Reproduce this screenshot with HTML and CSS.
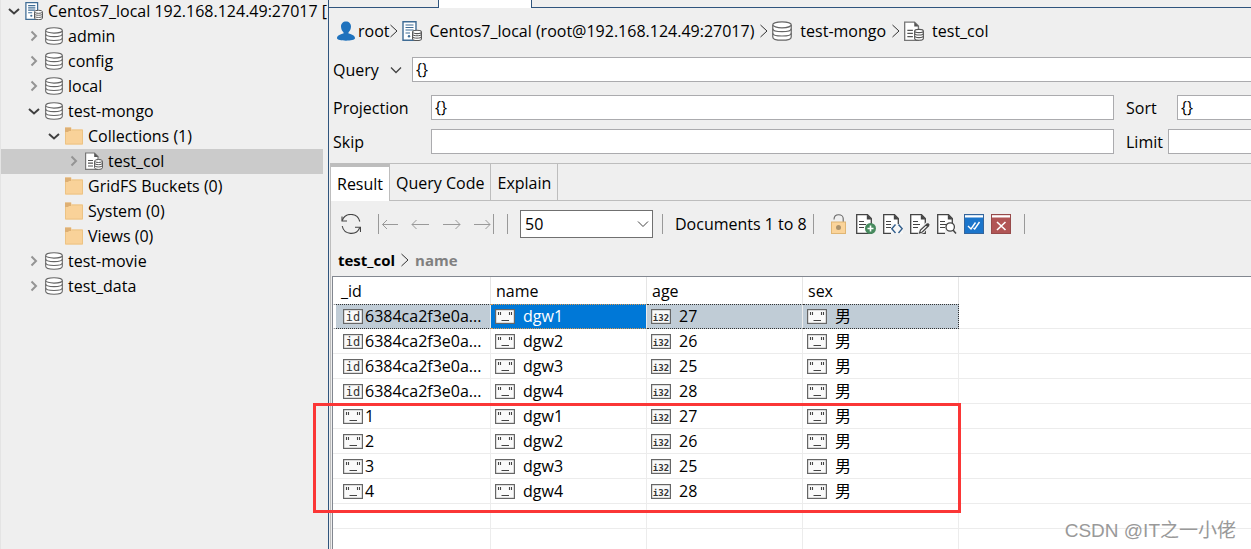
FILE: index.html
```html
<!DOCTYPE html>
<html lang="en">

<head>
    <meta charset="UTF-8">
    <meta name="viewport" content="width=device-width, initial-scale=1.0">
    <title>test_col - Centos7_local</title>
    <link rel="stylesheet" href="styles.css">
</head>

<body>
    <!-- Shared icons -->
    <svg class="sprite" xmlns="http://www.w3.org/2000/svg">
        <symbol id="i-right" viewBox="0 0 14 14">
            <path d="M4.5 2.5L9 7L4.5 11.5" fill="none" stroke="#949494" stroke-width="2" />
        </symbol>
        <symbol id="i-down" viewBox="0 0 14 14">
            <path d="M2 5L7 9.5L12 5" fill="none" stroke="#404040" stroke-width="2" />
        </symbol>
        <symbol id="i-sep" viewBox="0 0 8 14">
            <path d="M0.5 1L7 7L0.5 13" fill="none" stroke="#333" />
        </symbol>
        <symbol id="i-db" viewBox="0 0 18 18">
            <path d="M0.7 3.5V14.3C0.7 16.2 4.4 17.3 9 17.3S17.3 16.2 17.3 14.3V3.5" fill="#fff" stroke="#666" stroke-width="1.1" />
            <ellipse cx="9" cy="3.4" rx="8.3" ry="2.7" fill="#fff" stroke="#666" stroke-width="1.1" />
            <path d="M0.7 7C0.7 8.9 4.4 9.6 9 9.6S17.3 8.9 17.3 7M0.7 11C0.7 12.9 4.4 13.5 9 13.5S17.3 12.9 17.3 11" fill="none" stroke="#666" stroke-width="1.1" />
        </symbol>
        <symbol id="i-server" viewBox="0 0 20 20">
            <path d="M1 0.8H14V19.2H1Z" fill="#fff" stroke="#3f6c95" stroke-width="1.4" />
            <path d="M3.5 4H11.5M3.5 6.5H11.5M3.5 9H11.5M3.5 12H8" stroke="#3f6c95" stroke-width="1.2" />
            <circle cx="7" cy="15.3" r="1.2" fill="#3f6c95" />
            <path d="M10.6 10.9V18C10.6 20.1 19.4 20.1 19.4 18V10.9" fill="#fff" stroke="#555" stroke-width="1.1" />
            <ellipse cx="15" cy="10.9" rx="4.4" ry="1.7" fill="#fff" stroke="#555" stroke-width="1.1" />
            <path d="M10.6 13.4C10.6 15.2 19.4 15.2 19.4 13.4M10.6 15.8C10.6 17.6 19.4 17.6 19.4 15.8" fill="none" stroke="#555" />
        </symbol>
        <symbol id="i-folder" viewBox="0 0 18 18">
            <path d="M0 0.5H6.5V2.5H18V17.5H0Z" fill="#f9d299" />
            <path d="M0.5 4V17H17.5V3H6.5" fill="none" stroke="#ecc384" />
            <path d="M0 0.5H6V4H4L3 5H0Z" fill="#deb074" />
        </symbol>
        <symbol id="i-col" viewBox="0 0 18 18">
            <path d="M0.6 1H9.5L13 4.5V17.4H0.6Z" fill="#fff" stroke="#777" stroke-width="1.2" />
            <path d="M9.2 1V5H13.4Z" fill="#555" />
            <path d="M3 8.5H8M3 11.2H8M3 14H8" stroke="#555" stroke-width="1.2" />
            <path d="M9.6 9V15.8C9.6 17.9 17.4 17.9 17.4 15.8V9" fill="#fff" stroke="#555" />
            <ellipse cx="13.5" cy="9" rx="3.9" ry="1.5" fill="#fff" stroke="#555" />
            <path d="M9.6 11.2C9.6 13.1 17.4 13.1 17.4 11.2M9.6 13.5C9.6 15.4 17.4 15.4 17.4 13.5" fill="none" stroke="#555" />
        </symbol>
        <symbol id="i-doc" viewBox="0 0 20 20">
            <path d="M0.7 0.7H11.5L15.3 4.5V19.3H0.7Z" fill="#fff" stroke="#444" stroke-width="1.3" />
            <path d="M10.8 0.5V5.5H16Z" fill="#444" />
            <path d="M3 7.5H8M3 10.5H10M3 13.5H8" stroke="#444" stroke-width="1.2" />
        </symbol>
        <symbol id="t-str" viewBox="0 0 20 15">
            <rect x="0.6" y="0.6" width="18.8" height="13.8" fill="#fafafa" stroke="#666" stroke-width="1.2" />
            <path d="M3.5 3V6M5.5 3V6M14.5 3V6M16.5 3V6M6.5 11.5H14" stroke="#444" stroke-width="1.1" />
        </symbol>
        <symbol id="t-id" viewBox="0 0 20 15">
            <rect x="0.6" y="0.6" width="18.8" height="13.8" fill="#fafafa" stroke="#666" stroke-width="1.2" />
            <text x="10" y="11.5" text-anchor="middle" class="type-text">id</text>
        </symbol>
        <symbol id="t-int" viewBox="0 0 20 15">
            <rect x="0.6" y="0.6" width="18.8" height="13.8" fill="#fafafa" stroke="#666" stroke-width="1.2" />
            <text x="10" y="11.5" text-anchor="middle" class="type-text int">i32</text>
        </symbol>
    </svg>

    <div class="app">
        <!-- Connection tree -->
        <nav class="sidebar">
            <ul class="tree">
                <li class="node root"><svg class="arrow"><use href="#i-down" /></svg><svg class="icon"><use href="#i-server" /></svg>Centos7_local 192.168.124.49:27017 [</li>
                <li class="node level-1"><svg class="arrow"><use href="#i-right" /></svg><svg class="icon"><use href="#i-db" /></svg>admin</li>
                <li class="node level-1"><svg class="arrow"><use href="#i-right" /></svg><svg class="icon"><use href="#i-db" /></svg>config</li>
                <li class="node level-1"><svg class="arrow"><use href="#i-right" /></svg><svg class="icon"><use href="#i-db" /></svg>local</li>
                <li class="node level-1"><svg class="arrow"><use href="#i-down" /></svg><svg class="icon"><use href="#i-db" /></svg>test-mongo</li>
                <li class="node level-2"><svg class="arrow"><use href="#i-down" /></svg><svg class="icon"><use href="#i-folder" /></svg>Collections (1)</li>
                <li class="node level-3 selected"><svg class="arrow"><use href="#i-right" /></svg><svg class="icon"><use href="#i-col" /></svg>test_col</li>
                <li class="node level-2"><span class="arrow"></span><svg class="icon"><use href="#i-folder" /></svg>GridFS Buckets (0)</li>
                <li class="node level-2"><span class="arrow"></span><svg class="icon"><use href="#i-folder" /></svg>System (0)</li>
                <li class="node level-2"><span class="arrow"></span><svg class="icon"><use href="#i-folder" /></svg>Views (0)</li>
                <li class="node level-1"><svg class="arrow"><use href="#i-right" /></svg><svg class="icon"><use href="#i-db" /></svg>test-movie</li>
                <li class="node level-1"><svg class="arrow"><use href="#i-right" /></svg><svg class="icon"><use href="#i-db" /></svg>test_data</li>
            </ul>
        </nav>

        <main class="editor">
            <div class="editor-tabs">
                <div class="editor-tab"></div>
                <div class="editor-tab active"></div>
                <div class="editor-rest"></div>
            </div>

            <div class="breadcrumb">
                <svg class="user" viewBox="0 0 18 20">
                    <path d="M9 0.5C12 0.5 14 2.6 14 5.5C14 8 12.8 10.3 11.5 11.3V12.5C15 13.3 18 14.5 18 17.3C18 19 13.5 19.7 9 19.7S0 19 0 17.3C0 14.5 3 13.3 6.5 12.5V11.3C5.2 10.3 4 8 4 5.5C4 2.6 6 0.5 9 0.5Z" fill="#1f72bd" />
                </svg>
                <span class="crumb-user">root</span>
                <svg class="sep"><use href="#i-sep" /></svg>
                <svg class="crumb-icon"><use href="#i-server" /></svg>
                <span class="crumb">Centos7_local (root@192.168.124.49:27017)</span>
                <svg class="sep"><use href="#i-sep" /></svg>
                <svg class="crumb-icon"><use href="#i-db" /></svg>
                <span class="crumb">test-mongo</span>
                <svg class="sep"><use href="#i-sep" /></svg>
                <svg class="crumb-icon"><use href="#i-col" /></svg>
                <span class="crumb">test_col</span>
            </div>

            <form class="query-form">
                <div class="query-row">
                    <label for="query">Query</label>
                    <button type="button" class="history" aria-label="Query history">
                        <svg viewBox="0 0 12 8"><path d="M1 1.5L6 6.5L11 1.5" fill="none" stroke="#444" stroke-width="1.3" /></svg>
                    </button>
                    <input type="text" id="query" value="{}">
                </div>
                <div class="option-row">
                    <label for="projection" class="label-left">Projection</label>
                    <input type="text" id="projection" value="{}">
                    <div class="option-right">
                        <label for="sort" class="label-sort">Sort</label>
                        <input type="text" id="sort" value="{}">
                    </div>
                </div>
                <div class="option-row">
                    <label for="skip" class="label-left">Skip</label>
                    <input type="text" id="skip">
                    <div class="option-right">
                        <label for="limit" class="label-limit">Limit</label>
                        <input type="text" id="limit">
                    </div>
                </div>
            </form>

            <section class="result">
                <div class="tabs">
                    <button type="button" class="tab active">Result</button>
                    <button type="button" class="tab">Query Code</button>
                    <button type="button" class="tab">Explain</button>
                </div>

                <div class="toolbar">
                    <button type="button" class="tool refresh" aria-label="Refresh">
                        <svg viewBox="0 0 20 20" fill="none" stroke="#444" stroke-width="1.1">
                            <path d="M1.2 6.5A9.2 9.2 0 0 1 18.8 7.5M18.8 13.5A9.2 9.2 0 0 1 1.2 12" />
                            <path d="M1 2.5V7H6M19.5 18V13.3H14" />
                        </svg>
                    </button>
                    <div class="pager">
                        <button type="button" class="tool" aria-label="First page">
                            <svg viewBox="0 0 20 20" fill="none" stroke="#999"><path d="M0.5 0V20M20 10.5H4.5M9 6L4.5 10.5L9 15" /></svg>
                        </button>
                        <button type="button" class="tool" aria-label="Previous page">
                            <svg viewBox="0 0 20 20" fill="none" stroke="#999"><path d="M19 10.5H2M6.5 6L2 10.5L6.5 15" /></svg>
                        </button>
                        <button type="button" class="tool" aria-label="Next page">
                            <svg viewBox="0 0 20 20" fill="none" stroke="#999"><path d="M1 10.5H18M13.5 6L18 10.5L13.5 15" /></svg>
                        </button>
                        <button type="button" class="tool" aria-label="Last page">
                            <svg viewBox="0 0 20 20" fill="none" stroke="#999"><path d="M19.5 0V20M0 10.5H16M11.5 6L16 10.5L11.5 15" /></svg>
                        </button>
                    </div>
                    <span class="divider"></span>
                    <div class="page-size">
                        <select aria-label="Page size">
                            <option>50</option>
                        </select>
                        <svg viewBox="0 0 12 8"><path d="M1 1.5L6 6.5L11 1.5" fill="none" stroke="#444" /></svg>
                    </div>
                    <span class="divider"></span>
                    <span class="count">Documents 1 to 8</span>
                    <span class="divider"></span>
                    <div class="actions">
                        <button type="button" class="tool" aria-label="Unlock editing">
                            <svg viewBox="0 0 20 20">
                                <path d="M5 5.5C5 2.5 7 0.7 9.7 0.7S14.2 2.5 14.2 4.5V8" fill="none" stroke="#666" stroke-width="1.1" />
                                <rect x="2.5" y="8" width="14" height="11.5" fill="#fbd49a" stroke="#e0b674" />
                                <circle cx="9.5" cy="13.5" r="2.5" fill="#ab926c" />
                            </svg>
                        </button>
                        <button type="button" class="tool" aria-label="Add document">
                            <svg viewBox="0 0 20 20">
                                <use href="#i-doc" />
                                <circle cx="14.5" cy="14.5" r="5.5" fill="#478a5e" />
                                <path d="M14.5 11.5V17.5M11.5 14.5H17.5" stroke="#fff" stroke-width="1.6" />
                            </svg>
                        </button>
                        <button type="button" class="tool" aria-label="View as JSON">
                            <svg viewBox="0 0 20 20">
                                <use href="#i-doc" />
                                <rect x="8" y="10" width="12" height="10" fill="#f6f6f6" />
                                <path d="M12.5 10.5L8.8 14.7L12.5 19M15.5 10.5L19.2 14.7L15.5 19" fill="none" stroke="#335f8c" stroke-width="1.4" />
                            </svg>
                        </button>
                        <button type="button" class="tool" aria-label="Edit document">
                            <svg viewBox="0 0 20 20">
                                <use href="#i-doc" />
                                <path d="M9 19.5L10 15.5L17.5 8.5L20 11L12.7 18.3Z" fill="#fff" stroke="#efefef" stroke-width="2" />
                                <path d="M9.5 19L10.5 16L17 10L18.7 11.7L12.3 18Z" fill="#fff" stroke="#444" stroke-width="1.2" />
                                <path d="M15.5 11.2L18 9L19.7 10.5L17.3 13Z" fill="#444" />
                            </svg>
                        </button>
                        <button type="button" class="tool" aria-label="View document">
                            <svg viewBox="0 0 20 20">
                                <use href="#i-doc" />
                                <rect x="8" y="14" width="9" height="6" fill="#efefef" />
                                <circle cx="13.2" cy="13" r="4.2" fill="#fff" stroke="#444" stroke-width="1.3" />
                                <path d="M16 16L19 19.5" stroke="#444" stroke-width="1.5" />
                            </svg>
                        </button>
                        <button type="button" class="tool" aria-label="Validate">
                            <svg viewBox="0 0 20 20">
                                <rect x="0.5" y="0.5" width="19" height="19" fill="#1b75cb" stroke="#34659c" />
                                <rect x="1" y="1.2" width="18" height="2.3" fill="#fff" />
                                <path d="M4 12L7 15L11.5 8.5M9.5 14L10.7 15L15.5 8" fill="none" stroke="#fff" stroke-width="1.4" />
                            </svg>
                        </button>
                        <button type="button" class="tool" aria-label="Delete document">
                            <svg viewBox="0 0 20 20">
                                <rect x="0.5" y="0.5" width="19" height="19" fill="#b15555" stroke="#974a4a" />
                                <rect x="1" y="1.2" width="18" height="2.3" fill="#fff" />
                                <path d="M6 8L14.5 16M14.5 8L6 16" stroke="#fff" stroke-width="1.6" />
                            </svg>
                        </button>
                    </div>
                    <span class="divider"></span>
                </div>

                <div class="path">
                    <span>test_col</span>
                    <svg class="sep"><use href="#i-sep" /></svg>
                    <span class="path-field">name</span>
                </div>

                <div class="grid-box">
                    <table class="grid">
                        <colgroup>
                            <col class="col-first">
                            <col class="col-data">
                            <col class="col-data">
                            <col class="col-data">
                            <col>
                        </colgroup>
                        <thead>
                            <tr><th>_id</th><th>name</th><th>age</th><th>sex</th><th></th></tr>
                        </thead>
                        <tbody>
                            <tr class="selected">
                                <td><svg class="type"><use href="#t-id" /></svg>6384ca2f3e0a...</td>
                                <td class="active"><svg class="type"><use href="#t-str" /></svg>dgw1</td>
                                <td><svg class="type"><use href="#t-int" /></svg>27</td>
                                <td><svg class="type"><use href="#t-str" /></svg>男</td>
                                <td></td>
                            </tr>
                            <tr>
                                <td><svg class="type"><use href="#t-id" /></svg>6384ca2f3e0a...</td>
                                <td><svg class="type"><use href="#t-str" /></svg>dgw2</td>
                                <td><svg class="type"><use href="#t-int" /></svg>26</td>
                                <td><svg class="type"><use href="#t-str" /></svg>男</td>
                                <td></td>
                            </tr>
                            <tr>
                                <td><svg class="type"><use href="#t-id" /></svg>6384ca2f3e0a...</td>
                                <td><svg class="type"><use href="#t-str" /></svg>dgw3</td>
                                <td><svg class="type"><use href="#t-int" /></svg>25</td>
                                <td><svg class="type"><use href="#t-str" /></svg>男</td>
                                <td></td>
                            </tr>
                            <tr>
                                <td><svg class="type"><use href="#t-id" /></svg>6384ca2f3e0a...</td>
                                <td><svg class="type"><use href="#t-str" /></svg>dgw4</td>
                                <td><svg class="type"><use href="#t-int" /></svg>28</td>
                                <td><svg class="type"><use href="#t-str" /></svg>男</td>
                                <td></td>
                            </tr>
                            <tr>
                                <td><svg class="type"><use href="#t-str" /></svg>1</td>
                                <td><svg class="type"><use href="#t-str" /></svg>dgw1</td>
                                <td><svg class="type"><use href="#t-int" /></svg>27</td>
                                <td><svg class="type"><use href="#t-str" /></svg>男</td>
                                <td></td>
                            </tr>
                            <tr>
                                <td><svg class="type"><use href="#t-str" /></svg>2</td>
                                <td><svg class="type"><use href="#t-str" /></svg>dgw2</td>
                                <td><svg class="type"><use href="#t-int" /></svg>26</td>
                                <td><svg class="type"><use href="#t-str" /></svg>男</td>
                                <td></td>
                            </tr>
                            <tr>
                                <td><svg class="type"><use href="#t-str" /></svg>3</td>
                                <td><svg class="type"><use href="#t-str" /></svg>dgw3</td>
                                <td><svg class="type"><use href="#t-int" /></svg>25</td>
                                <td><svg class="type"><use href="#t-str" /></svg>男</td>
                                <td></td>
                            </tr>
                            <tr>
                                <td><svg class="type"><use href="#t-str" /></svg>4</td>
                                <td><svg class="type"><use href="#t-str" /></svg>dgw4</td>
                                <td><svg class="type"><use href="#t-int" /></svg>28</td>
                                <td><svg class="type"><use href="#t-str" /></svg>男</td>
                                <td></td>
                            </tr>
                            <tr><td></td><td></td><td></td><td></td><td></td></tr>
                            <tr><td></td><td></td><td></td><td></td><td></td></tr>
                        </tbody>
                    </table>
                    <div class="highlight"></div>
                </div>
            </section>
        </main>
        <div class="watermark">CSDN @IT之一小佬</div>
    </div>
</body>

</html>
```

FILE: styles.css
```css
* {
    margin: 0;
    padding: 0;
    box-sizing: border-box;
}

body {
    background-color: #efefef;
    color: #000;
    font-family: "Open Sans", "Noto Sans CJK SC", sans-serif;
    font-size: 16px;
    line-height: 22px;
}

button,
input,
select {
    font: inherit;
    color: inherit;
}

button {
    background: none;
    border: none;
}

svg {
    display: block;
    flex-shrink: 0;
}

.sprite {
    display: none;
}

.app {
    position: relative;
    display: flex;
    height: 100vh;
    overflow: hidden;
}

/* Sidebar */
.sidebar {
    flex: 0 0 328px;
    min-width: 0;
    padding-right: 5px;
    border-left: 1px solid #e4e4e4;
}

.tree {
    list-style: none;
}

.node {
    display: flex;
    align-items: center;
    height: 25px;
    padding-left: 6px;
    padding-bottom: 2px;
    white-space: nowrap;
}

.node.root {
    height: 24px;
}

.level-1 {
    padding-left: 26px;
}

.level-2 {
    padding-left: 46px;
}

.level-3 {
    padding-left: 66px;
}

.node.selected {
    background-color: #cbcbcb;
}

.arrow {
    width: 14px;
    height: 14px;
    margin-right: 4px;
}

.icon {
    width: 18px;
    height: 18px;
    margin-right: 5px;
}

/* Editor */
.editor {
    flex: 1;
    min-width: 0;
    display: flex;
    flex-direction: column;
    border-left: 1px solid #2f547d;
}

.editor-tabs {
    display: flex;
    height: 8px;
    flex-shrink: 0;
}

.editor-tab {
    width: 109px;
    border-bottom: 1px solid #2f547d;
}

.editor-tab.active {
    width: 94px;
    background-color: #fff;
    border: solid #2f547d;
    border-width: 0 1px;
}

.editor-rest {
    flex: 1;
    border-bottom: 1px solid #2f547d;
}

.breadcrumb {
    display: flex;
    flex-shrink: 0;
    align-items: center;
    height: 46px;
    padding-left: 8px;
    white-space: nowrap;
}

.user {
    width: 18px;
    height: 20px;
    margin-right: 3px;
}

.sep {
    width: 8px;
    height: 14px;
}

.crumb-icon {
    width: 20px;
    height: 20px;
    margin: 0 8px 0 4px;
}

.crumb {
    margin-right: 6px;
}

/* Query form */
.query-form {
    flex-shrink: 0;
    padding: 3px 0 9px 4px;
}

.query-row,
.option-row,
.option-right {
    display: flex;
    align-items: center;
}

.query-row {
    margin-bottom: 13px;
}

.option-row {
    margin-bottom: 9px;
}

.option-row:last-child {
    margin-bottom: 0;
}

.query-row label {
    width: 57px;
}

.history {
    width: 12px;
    margin-right: 10px;
}

.query-form input {
    flex: 1;
    min-width: 0;
    height: 25px;
    padding: 0 3px 1px;
    background-color: #fff;
    border: 1px solid #ababae;
    outline: none;
}

.query-row input,
.option-right input {
    border-right: none;
}

.label-left {
    width: 98px;
}

.option-right {
    width: 137px;
    padding-left: 12px;
}

.label-sort {
    width: 51px;
}

.label-limit {
    width: 42px;
}

/* Result panel */
.result {
    flex: 1;
    display: flex;
    flex-direction: column;
    margin-left: 1px;
    border-top: 1px solid #bdbdbd;
    border-left: 1px solid #bdbdbd;
}

.tabs {
    display: flex;
    height: 37px;
    border-bottom: 1px solid #bdbdbd;
}

.tab {
    height: 36px;
    padding: 2px 6px 0;
    border-right: 1px solid #bdbdbd;
}

.tab.active {
    height: 37px;
    padding-top: 0;
    background-color: #fff;
    border-top: 3px solid #bdbdbd;
}

.toolbar {
    display: flex;
    align-items: center;
    height: 46px;
    padding-left: 10px;
    white-space: nowrap;
}

.tool {
    width: 20px;
    height: 20px;
}

.tool svg {
    width: 20px;
    height: 20px;
}

.pager {
    display: flex;
    gap: 12px;
    margin: 0 13px 0 17px;
}

.divider {
    width: 1px;
    height: 20px;
    background-color: #999;
}

.page-size {
    position: relative;
    width: 133px;
    margin: 0 9px 0 12px;
}

.page-size select {
    display: block;
    width: 100%;
    height: 28px;
    padding-left: 4px;
    background-color: #fff;
    border: 1px solid #707070;
    border-radius: 0;
    appearance: none;
}

.page-size svg {
    position: absolute;
    top: 10px;
    right: 4px;
    width: 12px;
    height: 8px;
    pointer-events: none;
}

.count {
    margin: 0 6px 0 12px;
}

.actions {
    display: flex;
    gap: 7px;
    margin: 0 13px 0 15px;
}

.path {
    display: flex;
    align-items: center;
    gap: 6px;
    height: 29px;
    padding: 0 0 4px 7px;
    font-size: 15px;
    font-weight: bold;
}

.path-field {
    color: #808080;
}

/* Documents grid */
.grid-box {
    position: relative;
    flex: 1;
    margin-left: 1px;
    background-color: #fff;
    border-top: 1px solid #828790;
    border-left: 1px solid #828790;
}

.grid {
    width: 100%;
    table-layout: fixed;
    border-spacing: 0;
}

.col-first {
    width: 158px;
}

.col-data {
    width: 156px;
}

.grid th {
    height: 27px;
    padding-left: 5px;
    font-weight: normal;
    text-align: left;
    border-right: 1px solid #e5e5e5;
}

.grid th:first-child {
    padding-left: 8px;
}

.grid td {
    height: 25px;
    padding: 0 0 0 4px;
    white-space: nowrap;
    border-right: 1px solid #ececec;
    border-bottom: 1px solid #ececec;
}

.grid td:first-child {
    padding-left: 10px;
}

.grid th:last-child,
.grid td:last-child {
    border-right: none;
}

.type {
    display: inline-block;
    width: 20px;
    height: 15px;
    margin-right: 8px;
    vertical-align: -2px;
}

.grid td:first-child .type {
    margin-right: 2px;
}

.type-text {
    font-family: "DejaVu Sans Mono", monospace;
    font-size: 12px;
    fill: #333;
}

.type-text.int {
    font-size: 9px;
    font-weight: bold;
}

.grid .selected td:not(:last-child) {
    padding-bottom: 1px;
    background-color: #c0ccd6;
    border-top: 1px dotted #333;
    border-bottom: 1px dotted #333;
}

.grid .selected td:first-child {
    border-left: 3px solid #fff;
    padding-left: 7px;
}

.grid .selected td:nth-child(4) {
    border-right: 1px dotted #333;
}

.grid .selected td.active {
    background-color: #0078d7;
    border-color: #e09a4e;
    border-right-color: #ececec;
    color: #fff;
}

/* Red frame around the last four documents */
.highlight {
    position: absolute;
    top: 126px;
    left: -20px;
    width: 648px;
    height: 110px;
    border: 3px solid #fb3636;
}

.watermark {
    position: absolute;
    right: 15px;
    bottom: 7px;
    font-family: "Liberation Sans", "Noto Sans CJK SC", sans-serif;
    font-size: 19px;
    color: #999;
}
```
